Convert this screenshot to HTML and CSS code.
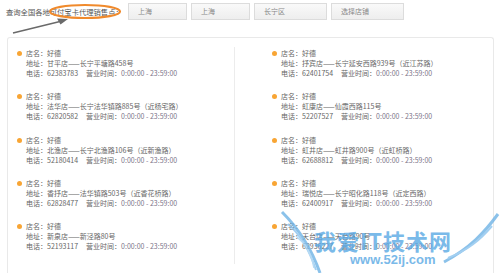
FILE: index.html
```html
<!DOCTYPE html>
<html>
<head>
    <title>代理销售点查询</title>
    <link rel="stylesheet" href="styles.css">
</head>
<body>
    <div class="search-bar">
        <span class="search-label">查询全国各地可付宝卡代理销售点：</span>
        <div class="select-box short">上海</div>
        <div class="select-box short">上海</div>
        <div class="select-box">长宁区</div>
        <div class="select-box">选择店铺</div>
    </div>

    <div class="store-panel">
        <div class="store-col left">
            <div class="store">
                <div class="store-name">店名：好德</div>
                <div>地址：甘平店——长宁平塘路458号</div>
                <div>电话：62383783<span class="hours">营业时间：<span class="time">0:00:00 - 23:59:00</span></span></div>
            </div>
            <div class="store">
                <div class="store-name">店名：好德</div>
                <div>地址：法华店——长宁法华镇路885号（近杨宅路）</div>
                <div>电话：62820582<span class="hours">营业时间：<span class="time">0:00:00 - 23:59:00</span></span></div>
            </div>
            <div class="store">
                <div class="store-name">店名：好德</div>
                <div>地址：北渔店——长宁北渔路106号（近新渔路）</div>
                <div>电话：52180414<span class="hours">营业时间：<span class="time">0:00:00 - 23:59:00</span></span></div>
            </div>
            <div class="store">
                <div class="store-name">店名：好德</div>
                <div>地址：香抒店——法华镇路503号（近香花桥路）</div>
                <div>电话：62828477<span class="hours">营业时间：<span class="time">0:00:00 - 23:59:00</span></span></div>
            </div>
            <div class="store">
                <div class="store-name">店名：好德</div>
                <div>地址：新泉店——新泾路80号</div>
                <div>电话：52193117<span class="hours">营业时间：<span class="time">0:00:00 - 23:59:00</span></span></div>
            </div>
        </div>
        <div class="store-col right">
            <div class="store">
                <div class="store-name">店名：好德</div>
                <div>地址：抒宾店——长宁延安西路939号（近江苏路）</div>
                <div>电话：62401754<span class="hours">营业时间：<span class="time">0:00:00 - 23:59:00</span></span></div>
            </div>
            <div class="store">
                <div class="store-name">店名：好德</div>
                <div>地址：虹康店——仙霞西路115号</div>
                <div>电话：52207527<span class="hours">营业时间：<span class="time">0:00:00 - 23:59:00</span></span></div>
            </div>
            <div class="store">
                <div class="store-name">店名：好德</div>
                <div>地址：虹井店——虹井路900号（近虹桥路）</div>
                <div>电话：62688812<span class="hours">营业时间：<span class="time">0:00:00 - 23:59:00</span></span></div>
            </div>
            <div class="store">
                <div class="store-name">店名：好德</div>
                <div>地址：瑞悦店——长宁昭化路118号（近定西路）</div>
                <div>电话：62400917<span class="hours">营业时间：<span class="time">0:00:00 - 23:59:00</span></span></div>
            </div>
            <div class="store">
                <div class="store-name">店名：好德</div>
                <div>地址：天台店——天台路90号</div>
                <div>电话：62936227<span class="hours">营业时间：<span class="time">0:00:00 - 23:59:00</span></span></div>
            </div>
        </div>
    </div>

    <!-- 标注：圈和箭头 -->
    <svg class="mark" width="140" height="40" viewBox="0 0 140 40">
        <ellipse cx="85" cy="11.5" rx="35" ry="6.5" fill="none" stroke="#f08a2c" stroke-width="2.2"/>
        <path d="M13 33 L62 21" stroke="#6a6a6a" stroke-width="1.6" fill="none"/>
        <path d="M68 19 L57 18.5 L60.5 24.5 Z" fill="#6a6a6a"/>
    </svg>

    <!-- 水印 -->
    <div class="watermark">
        <svg class="wings" width="220" height="65" viewBox="0 0 220 65">
            <path d="M2 2 C20 20 32 40 40 63" stroke="#6fb3e6" stroke-width="3" fill="none"/>
            <path d="M8 14 C22 26 30 42 36 60" stroke="#8cc4ee" stroke-width="2" fill="none"/>
            <path d="M16 26 C26 34 32 46 34 58" stroke="#a6d2f2" stroke-width="1.5" fill="none"/>
            <path d="M218 4 C205 22 190 38 164 52" stroke="#6fb3e6" stroke-width="3" fill="none"/>
            <path d="M212 16 C200 30 188 40 168 48" stroke="#8cc4ee" stroke-width="2" fill="none"/>
        </svg>
        <span class="wm-title">我爱IT技术网</span>
        <span class="wm-url">www.52ij.com</span>
    </div>
</body>
</html>
```

FILE: styles.css
```css
body {
    margin: 0;
    background: #fff;
    font-family: "Noto Sans CJK SC", "Liberation Sans", sans-serif;
    font-size: 7px;
    color: #666;
    position: relative;
    width: 500px;
    height: 273px;
    overflow: hidden;
}

.search-bar {
    display: flex;
    align-items: center;
    gap: 4px;
    padding: 3px 0 0 6px;
    height: 17px;
}

.search-label {
    color: #555;
    font-size: 7.3px;
    width: 117px;
    margin-right: 1px;
    white-space: nowrap;
}

.select-box {
    box-sizing: border-box;
    width: 73px;
    height: 17px;
    line-height: 15px;
    padding-left: 9px;
    border: 1px solid #dcdcdc;
    background: linear-gradient(#f9f9f9, #eeeeee);
    color: #888;
}

.select-box.short {
    width: 59px;
}

.store-panel {
    display: flex;
    margin: 17px 0 0 7px;
    width: 487px;
    height: 236px;
    box-sizing: border-box;
    border: 1px solid #e9e9e9;
    border-bottom: none;
    border-radius: 3px 3px 0 0;
    padding-top: 9px;
}

.store-col {
    padding-top: 1px;
}

.store-col.left {
    width: 226px;
}

.store-col.right {
    flex: 1;
    border-left: 1px solid #ececec;
    height: 216px;
}

.store {
    line-height: 10px;
    margin-bottom: 13.3px;
    white-space: nowrap;
}

.left .store {
    padding-left: 18px;
}

.right .store {
    padding-left: 46px;
}

.store-name::before {
    content: "";
    display: inline-block;
    width: 5px;
    height: 5px;
    border-radius: 50%;
    background: #f8a534;
    margin-left: -9px;
    margin-right: 4px;
    vertical-align: 0;
}

.hours {
    margin-left: 8px;
}

.time {
    color: #7b7488;
}

.mark {
    position: absolute;
    left: 0;
    top: 0;
}

.watermark {
    position: absolute;
    left: 280px;
    top: 210px;
    width: 220px;
    height: 63px;
    opacity: 0.8;
    overflow: hidden;
}

.wings {
    position: absolute;
    left: 0;
    top: 0;
}

.wm-title {
    position: absolute;
    left: 34px;
    top: 14px;
    font-size: 22px;
    font-weight: bold;
    color: #5aa9e4;
    letter-spacing: 1px;
    white-space: nowrap;
}

.wm-url {
    position: absolute;
    left: 70px;
    top: 42px;
    font-family: "Liberation Sans", sans-serif;
    font-size: 13px;
    font-weight: bold;
    color: #5aa9e4;
}
```
